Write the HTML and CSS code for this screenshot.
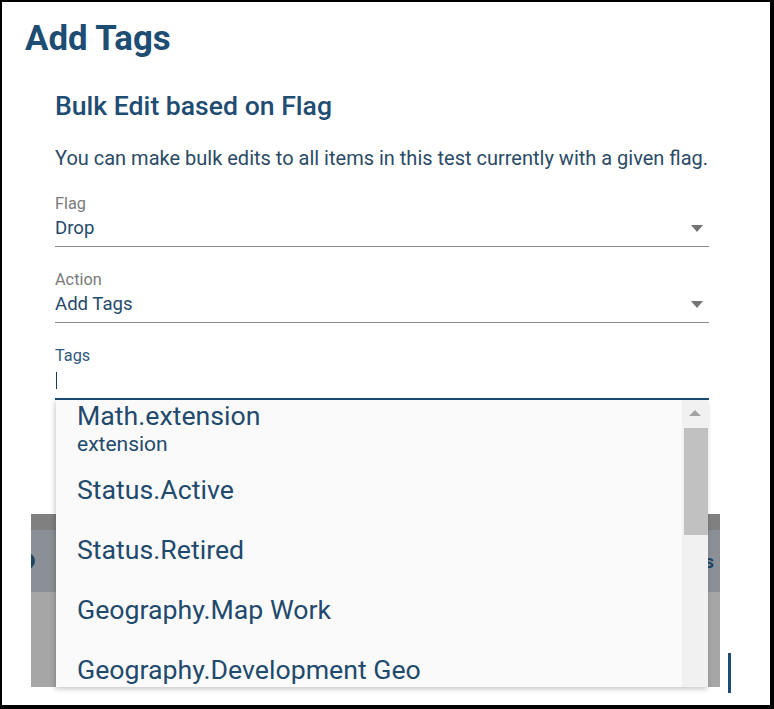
FILE: index.html
```html
<!DOCTYPE html>
<html lang="en">
<head>
<meta charset="utf-8">
<title>Add Tags</title>
<link rel="stylesheet" href="styles.css">
</head>
<body>
<div class="frame">
  <h1 class="title">Add Tags</h1>
  <div class="section">
    <h2 class="subtitle">Bulk Edit based on Flag</h2>
    <p class="desc">You can make bulk edits to all items in this test currently with a given flag.</p>

    <div class="field">
      <div class="label">Flag</div>
      <div class="value-row">
        <span class="value">Drop</span>
        <svg class="caret" width="12" height="7" viewBox="0 0 12 7"><path d="M0 0h12L6 7z" fill="#757575"/></svg>
      </div>
    </div>

    <div class="field">
      <div class="label">Action</div>
      <div class="value-row">
        <span class="value">Add Tags</span>
        <svg class="caret" width="12" height="7" viewBox="0 0 12 7"><path d="M0 0h12L6 7z" fill="#757575"/></svg>
      </div>
    </div>

    <div class="field field-focused">
      <div class="label label-focused">Tags</div>
      <div class="value-row">
        <span class="cursor"></span>
      </div>
      <div class="dropdown">
        <ul class="options">
          <li class="option option-two">
            <span class="opt-main">Math.extension</span>
            <span class="opt-sub">extension</span>
          </li>
          <li class="option">Status.Active</li>
          <li class="option">Status.Retired</li>
          <li class="option">Geography.Map Work</li>
          <li class="option">Geography.Development Geo</li>
        </ul>
        <div class="scrollbar">
          <div class="scroll-btn">
            <svg width="12" height="6" viewBox="0 0 12 6"><path d="M0 6h12L6 0z" fill="#a3a3a3"/></svg>
          </div>
          <div class="scroll-thumb"></div>
        </div>
      </div>
    </div>
  </div>

  <div class="backdrop">
    <div class="panel">
      <div class="panel-top"></div>
      <div class="panel-mid">
        <span class="panel-dot"></span>
        <span class="panel-text">Tags</span>
      </div>
      <div class="panel-bottom"></div>
    </div>
    <div class="panel-bar"></div>
  </div>
</div>
</body>
</html>
```

FILE: styles.css
```css
* { box-sizing: border-box; }

html, body {
  margin: 0;
  padding: 0;
  background: #fff;
}

body {
  font-family: Roboto, "Liberation Sans", Arial, sans-serif;
  color: #2b4a66;
}

.frame {
  width: 774px;
  height: 709px;
  border-style: solid;
  border-color: #000;
  border-width: 2px 4px 4px 2px;
  background: #fff;
  overflow: hidden;
}

.title {
  margin: 0;
  padding: 16px 0 0 23px;
  font-size: 34.8px;
  line-height: 40px;
  font-weight: 700;
  color: #1d4d73;
}

.section {
  padding: 0 61px 0 53px;
}

.subtitle {
  margin: 33px 0 0;
  font-size: 26.6px;
  line-height: 30px;
  font-weight: 500;
  color: #1f4c72;
}

.desc {
  margin: 24px 0 22px;
  font-size: 20px;
  line-height: 26px;
  color: #2b4a66;
  white-space: nowrap;
}

.field {
  border-bottom: 1px solid #8c8c8c;
  padding-bottom: 5px;
  margin-bottom: 22px;
}

.field-focused {
  position: relative;
  border-bottom: 2px solid #1d4d73;
  margin-bottom: 0;
}

.label {
  font-size: 16.3px;
  line-height: 22px;
  color: #7a7a7a;
}

.label-focused {
  color: #2e5a80;
}

.value-row {
  height: 26px;
  display: flex;
  align-items: center;
  justify-content: space-between;
}

.value {
  font-size: 18.6px;
  line-height: 26px;
  color: #24496b;
}

.caret {
  margin-right: 6px;
}

.cursor {
  display: block;
  width: 1px;
  height: 17px;
  margin-left: 1px;
  background: #1c3a55;
}

.dropdown {
  position: absolute;
  left: 1px;
  right: 1px;
  top: 100%;
  margin-top: 2px;
  height: 287px;
  background: #fafafa;
  box-shadow: -1px 2px 5px rgba(0, 0, 0, 0.22);
  display: flex;
  z-index: 5;
}

.options {
  list-style: none;
  margin: 0;
  padding: 0;
  flex: 1;
  overflow: hidden;
}

.option {
  height: 60px;
  line-height: 60px;
  padding-left: 21px;
  font-size: 26.7px;
  color: #1f4a6d;
  white-space: nowrap;
}

.option-two {
  display: flex;
  flex-direction: column;
  line-height: normal;
  padding-top: 1px;
}

.opt-main {
  font-size: 26.7px;
  line-height: 30px;
}

.opt-sub {
  font-size: 21px;
  line-height: 26px;
}

.scrollbar {
  width: 26px;
  background: #f1f1f1;
  display: flex;
  flex-direction: column;
}

.scroll-btn {
  height: 28px;
  display: flex;
  align-items: center;
  justify-content: center;
  padding-bottom: 2px;
}

.scroll-thumb {
  height: 107px;
  margin-left: 2px;
  background: #c1c1c1;
}

.backdrop {
  display: flex;
  align-items: flex-start;
  margin-top: 114px;
}

.panel {
  margin-left: 29px;
  width: 689px;
  height: 173px;
  display: flex;
  flex-direction: column;
  overflow: hidden;
}

.panel-top {
  height: 16px;
  background: #808080;
}

.panel-mid {
  height: 62px;
  background: #8b9096;
  display: flex;
  align-items: center;
  justify-content: space-between;
  padding-right: 6px;
}

.panel-dot {
  width: 16px;
  height: 16px;
  margin-left: -12px;
  border-radius: 50%;
  background: #1d4566;
}

.panel-text {
  font-size: 18px;
  font-weight: 700;
  color: #1d4566;
}

.panel-bottom {
  flex: 1;
  background: #a6a6a6;
}

.panel-bar {
  width: 3px;
  height: 40px;
  margin-left: 8px;
  margin-top: 139px;
  background: #1d4d73;
}
```
